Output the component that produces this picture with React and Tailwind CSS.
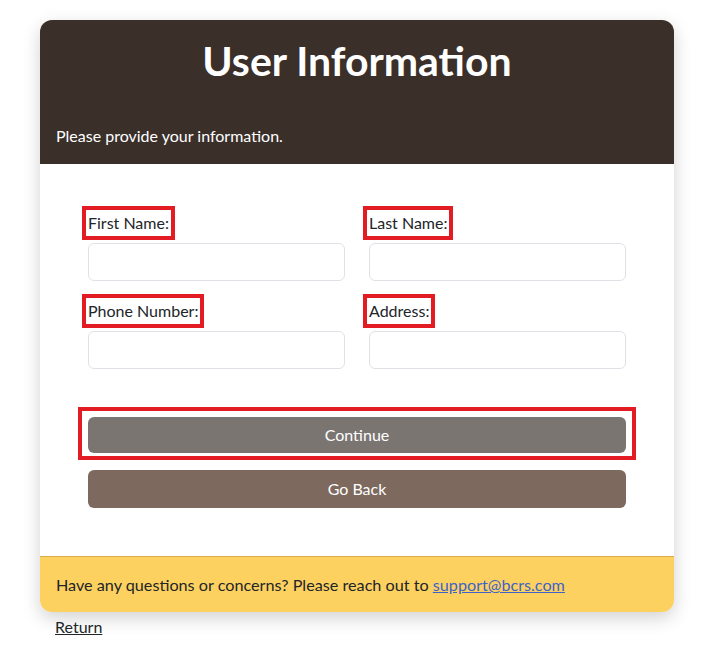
const fields = [
  { id: 'firstName', label: 'First Name:' },
  { id: 'lastName', label: 'Last Name:' },
  { id: 'phone', label: 'Phone Number:' },
  { id: 'address', label: 'Address:' },
];

const Field = ({ id, label }) => (
  <div className="flex flex-col items-start">
    <label
      htmlFor={id}
      className="mb-[9px] text-[16px] leading-[22px] text-[#212529] outline-4 outline-offset-2 outline-[#e31b23]"
    >
      {label}
    </label>
    <input
      id={id}
      type="text"
      className="h-[38px] w-full rounded-md border border-[#dee2e6] bg-white px-3"
    />
  </div>
);

const App = () => {
  return (
    <div className="min-h-screen bg-white pt-5 font-['Lato',sans-serif]">
      <div className="ml-10 w-[634px] overflow-hidden rounded-xl shadow-[0_6px_18px_rgba(0,0,0,0.18)]">
        <div className="bg-[#3b2f2a] px-4 pb-4 pt-[18px] text-white">
          <h1 className="text-center text-[41px] font-bold leading-[46px]">User Information</h1>
          <p className="mt-10 text-[16px] leading-6">Please provide your information.</p>
        </div>

        <div className="bg-white px-12 pb-12 pt-12">
          <div className="grid grid-cols-2 gap-x-6 gap-y-[19px]">
            {fields.map((f) => (
              <Field key={f.id} {...f} />
            ))}
          </div>

          <div className="-mx-[10px] mt-[38px] border-4 border-[#e31b23] px-[6px] pb-[3px] pt-[6px]">
            <button className="block h-9 w-full rounded-md bg-[#7b7572] text-[16px] text-white">
              Continue
            </button>
          </div>
          <button className="mt-[10px] block h-[38px] w-full rounded-md bg-[#7d695e] text-[16px] text-white">
            Go Back
          </button>
        </div>

        <div className="border-t border-[#d9ad4c] bg-[#fdd160] px-4 pb-[15px] pt-4 text-[16.2px] leading-6 text-[#212529]">
          Have any questions or concerns? Please reach out to{' '}
          <a href="#" className="text-[#3d63c9] underline">
            support@bcrs.com
          </a>
        </div>
      </div>
      <div className="ml-10 mt-[3px] w-[634px] pl-[15px]">
        <a href="#" className="text-[16px] leading-6 text-[#212529] underline">
          Return
        </a>
      </div>
    </div>
  );
};

export default App;
